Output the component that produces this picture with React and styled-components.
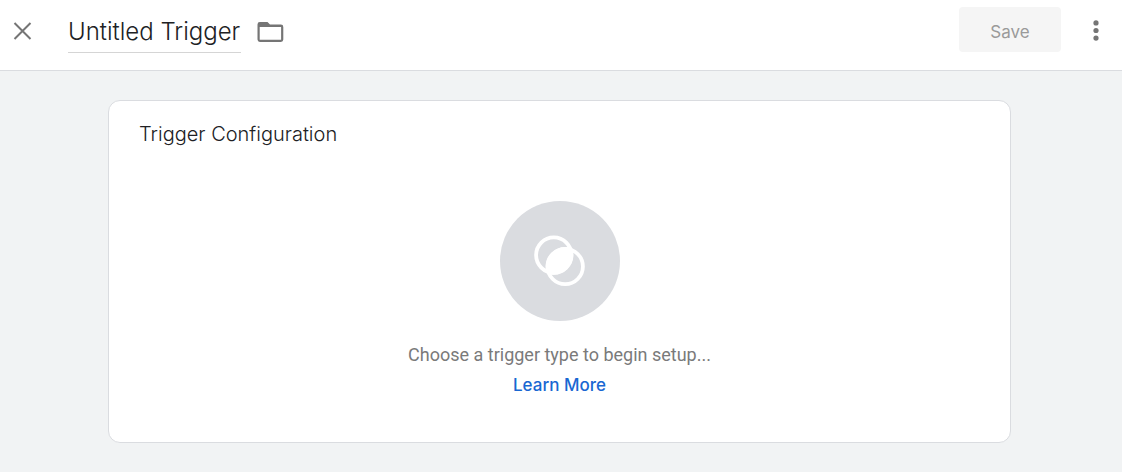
import React, { useState } from "react";
import styled, { createGlobalStyle } from "styled-components";

const GlobalStyle = createGlobalStyle`
  * {
    box-sizing: border-box;
  }
  body {
    margin: 0;
    background-color: #f1f3f4;
    font-family: Roboto, "Liberation Sans", sans-serif;
  }
`;

const Header = styled.header`
  display: flex;
  align-items: center;
  height: 71px;
  padding: 0 14px 11px 10px;
  background-color: #ffffff;
  border-bottom: 1px solid #dadce0;
`;

const IconButton = styled.button`
  display: flex;
  padding: 0;
  border: none;
  background: none;
  color: #757575;
  cursor: pointer;
`;

const NameInput = styled.input`
  width: 173px;
  height: 47px;
  margin: 0 16px 0 32px;
  padding: 4px 0 0;
  border: none;
  border-bottom: 1px solid #d5d5d5;
  outline: none;
  color: #202124;
  font-family: Inter, sans-serif;
  font-size: 24px;
  font-weight: 300;
`;

const Actions = styled.div`
  display: flex;
  align-items: center;
  gap: 23px;
  margin-left: auto;
`;

const SaveButton = styled.button`
  width: 102px;
  height: 45px;
  padding: 4px 0 0;
  border: none;
  border-radius: 4px;
  background-color: #f5f5f5;
  color: #9a9a9a;
  font-family: Inter, sans-serif;
  font-size: 17px;
`;

const Main = styled.main`
  padding: 29px 111px 29px 108px;
`;

const Card = styled.section`
  padding: 19px 30px 42px;
  background-color: #ffffff;
  border: 1px solid #dadce0;
  border-radius: 12px;
`;

const Title = styled.h2`
  margin: 0;
  color: #202124;
  font-family: Inter, sans-serif;
  font-size: 20px;
  font-weight: 300;
  line-height: 28px;
`;

const Empty = styled.div`
  display: flex;
  flex-direction: column;
  align-items: center;
  margin-top: 53px;
`;

const Badge = styled.div`
  display: flex;
  align-items: center;
  justify-content: center;
  width: 120px;
  height: 120px;
  border-radius: 50%;
  background-color: #dadce0;
`;

const Hint = styled.p`
  margin: 19px 0 0;
  color: #7a7a7a;
  font-size: 18px;
  line-height: 30px;
`;

const LearnMore = styled.a`
  color: #1967d2;
  font-family: Inter, sans-serif;
  font-size: 17px;
  font-weight: 500;
  line-height: 30px;
  text-decoration: none;
`;

const CloseIcon = () => (
  <svg width="26" height="26" viewBox="0 0 26 26" fill="none">
    <path d="M4.5 6L20.5 22M20.5 6L4.5 22" stroke="currentColor" strokeWidth="2" />
  </svg>
);

const FolderIcon = () => (
  <svg width="28" height="28" viewBox="0 0 28 28">
    <path
      fill="currentColor"
      fillRule="evenodd"
      d="M2.9 6H10.5L13 8.5H23.9A2.4 2.4 0 0 1 26.3 10.9V23.5A2.4 2.4 0 0 1 23.9 25.9H2.9A2.4 2.4 0 0 1 0.5 23.5V8.4A2.4 2.4 0 0 1 2.9 6ZM2.7 10.9V23.7H24.1V10.9Z"
    />
  </svg>
);

const MoreIcon = () => (
  <svg width="24" height="26" viewBox="0 0 24 26" fill="currentColor">
    <circle cx="12" cy="5.9" r="2.6" />
    <circle cx="12" cy="13.5" r="2.6" />
    <circle cx="12" cy="21.1" r="2.6" />
  </svg>
);

const TriggerIcon = () => (
  <svg width="52" height="52" viewBox="0 0 52 52">
    <g fill="none" stroke="#ffffff" strokeWidth="3.8">
      <circle cx="19.8" cy="20.1" r="17.7" />
      <circle cx="31.2" cy="31.5" r="17.7" />
    </g>
    {/* overlap of the two rings */}
    <path
      fill="#ffffff"
      d="M38.1 13.3A19.6 19.6 0 0 1 12.9 38.4A19.6 19.6 0 0 1 38.1 13.3Z"
    />
  </svg>
);

const App = () => {
  const [name, setName] = useState("Untitled Trigger");

  return (
    <>
      <GlobalStyle />
      <Header>
        <IconButton aria-label="Close">
          <CloseIcon />
        </IconButton>
        <NameInput
          aria-label="Trigger name"
          value={name}
          onChange={(e) => setName(e.target.value)}
        />
        <IconButton aria-label="Move to folder">
          <FolderIcon />
        </IconButton>
        <Actions>
          <SaveButton disabled>Save</SaveButton>
          <IconButton aria-label="More actions">
            <MoreIcon />
          </IconButton>
        </Actions>
      </Header>
      <Main>
        <Card>
          <Title>Trigger Configuration</Title>
          <Empty>
            <Badge>
              <TriggerIcon />
            </Badge>
            <Hint>Choose a trigger type to begin setup...</Hint>
            <LearnMore href="#">Learn More</LearnMore>
          </Empty>
        </Card>
      </Main>
    </>
  );
};

export default App;
